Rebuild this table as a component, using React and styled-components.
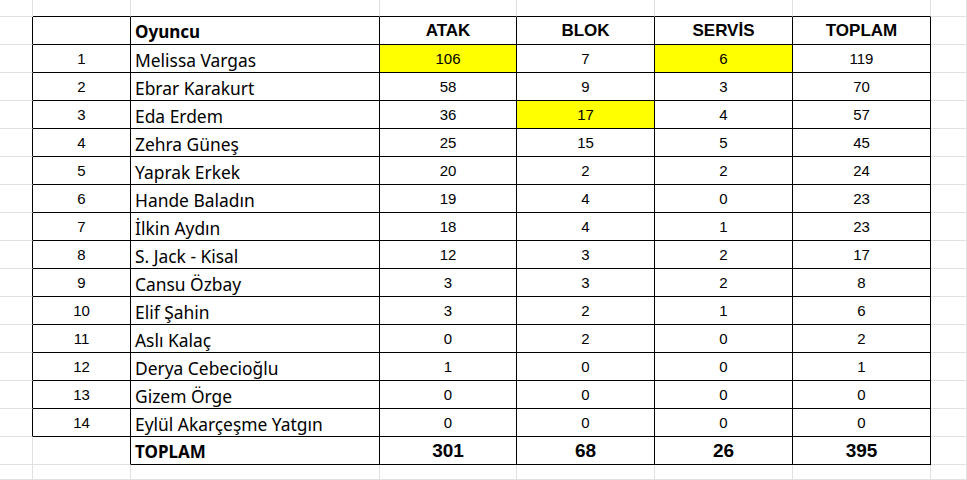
import styled, { createGlobalStyle, css } from 'styled-components';

const GlobalStyle = createGlobalStyle`
  html, body {
    margin: 0;
    padding: 0;
    background: #ffffff;
  }
  body {
    font-family: "Liberation Sans", Arial, sans-serif;
    color: #000000;
  }
`;

const GRID = '#e1e1e1';
const INK = '#000000';

const players = [
  ['Melissa Vargas', 106, 7, 6, 119],
  ['Ebrar Karakurt', 58, 9, 3, 70],
  ['Eda Erdem', 36, 17, 4, 57],
  ['Zehra Güneş', 25, 15, 5, 45],
  ['Yaprak Erkek', 20, 2, 2, 24],
  ['Hande Baladın', 19, 4, 0, 23],
  ['İlkin Aydın', 18, 4, 1, 23],
  ['S. Jack - Kisal', 12, 3, 2, 17],
  ['Cansu Özbay', 3, 3, 2, 8],
  ['Elif Şahin', 3, 2, 1, 6],
  ['Aslı Kalaç', 0, 2, 0, 2],
  ['Derya Cebecioğlu', 1, 0, 0, 1],
  ['Gizem Örge', 0, 0, 0, 0],
  ['Eylül Akarçeşme Yatgın', 0, 0, 0, 0],
];

// row index in players -> highlighted stat column (1 = ATAK, 2 = BLOK, 3 = SERVİS)
const highlights = { 0: [1, 3], 2: [2] };

const Sheet = styled.div`
  display: grid;
  grid-template-columns: 33px 98px 249px 137px 138px 138px 138px 1fr;
  grid-template-rows: 17px repeat(16, 28px) 15px;
  width: 100vw;
  height: 480px;
  overflow: hidden;
`;

const kinds = {
  blank: css``,
  idx: css`
    justify-content: center;
    font-size: 15px;
  `,
  num: css`
    justify-content: center;
    font-size: 15px;
  `,
  name: css`
    justify-content: flex-start;
    padding: 2px 0 0 4px;
    font-family: "Noto Sans", "Open Sans", sans-serif;
    font-size: 17.4px;
  `,
  nameHead: css`
    justify-content: flex-start;
    padding: 1px 0 0 4px;
    font-family: "Noto Sans", "Open Sans", sans-serif;
    font-size: 17px;
    font-weight: 700;
  `,
  head: css`
    justify-content: center;
    padding-top: 1px;
    font-size: 17px;
    font-weight: 700;
  `,
  total: css`
    justify-content: center;
    padding-top: 1px;
    font-size: 19px;
    font-weight: 700;
  `,
};

const Cell = styled.div`
  box-sizing: border-box;
  display: flex;
  align-items: center;
  white-space: nowrap;
  overflow: hidden;
  border-right: 1px solid ${(p) => (p.$darkRight ? INK : GRID)};
  border-bottom: 1px solid ${(p) => (p.$darkBottom ? INK : GRID)};
  background: ${(p) => (p.$hl ? '#ffff00' : 'transparent')};
  ${(p) => kinds[p.$kind]}
`;

function buildRows() {
  const rows = [];
  rows.push(Array.from({ length: 8 }, () => ({ kind: 'blank' })));
  rows.push([
    { kind: 'blank' },
    { kind: 'blank' },
    { kind: 'nameHead', text: 'Oyuncu' },
    { kind: 'head', text: 'ATAK' },
    { kind: 'head', text: 'BLOK' },
    { kind: 'head', text: 'SERVİS' },
    { kind: 'head', text: 'TOPLAM' },
    { kind: 'blank' },
  ]);
  players.forEach(([name, ...stats], i) => {
    rows.push([
      { kind: 'blank' },
      { kind: 'idx', text: i + 1 },
      { kind: 'name', text: name },
      ...stats.map((v, j) => ({
        kind: 'num',
        text: v,
        hl: (highlights[i] || []).includes(j + 1),
      })),
      { kind: 'blank' },
    ]);
  });
  rows.push([
    { kind: 'blank' },
    { kind: 'blank' },
    { kind: 'nameHead', text: 'TOPLAM' },
    { kind: 'total', text: 301 },
    { kind: 'total', text: 68 },
    { kind: 'total', text: 26 },
    { kind: 'total', text: 395 },
    { kind: 'blank' },
  ]);
  rows.push(Array.from({ length: 8 }, () => ({ kind: 'blank' })));
  return rows;
}

const lastData = 1 + players.length;
const totalRow = lastData + 1;

const boxed = (r, c) => {
  if (r >= 1 && r <= lastData) return c >= 1 && c <= 6;
  if (r === totalRow) return c >= 2 && c <= 6;
  return false;
};

export default function App() {
  const rows = buildRows();
  return (
    <>
      <GlobalStyle />
      <Sheet>
        {rows.map((row, r) =>
          row.map((cell, c) => (
            <Cell
              key={`${r}-${c}`}
              $kind={cell.kind}
              $hl={cell.hl}
              $darkRight={boxed(r, c) || boxed(r, c + 1)}
              $darkBottom={boxed(r, c) || boxed(r + 1, c)}
            >
              {cell.text}
            </Cell>
          ))
        )}
      </Sheet>
    </>
  );
}
